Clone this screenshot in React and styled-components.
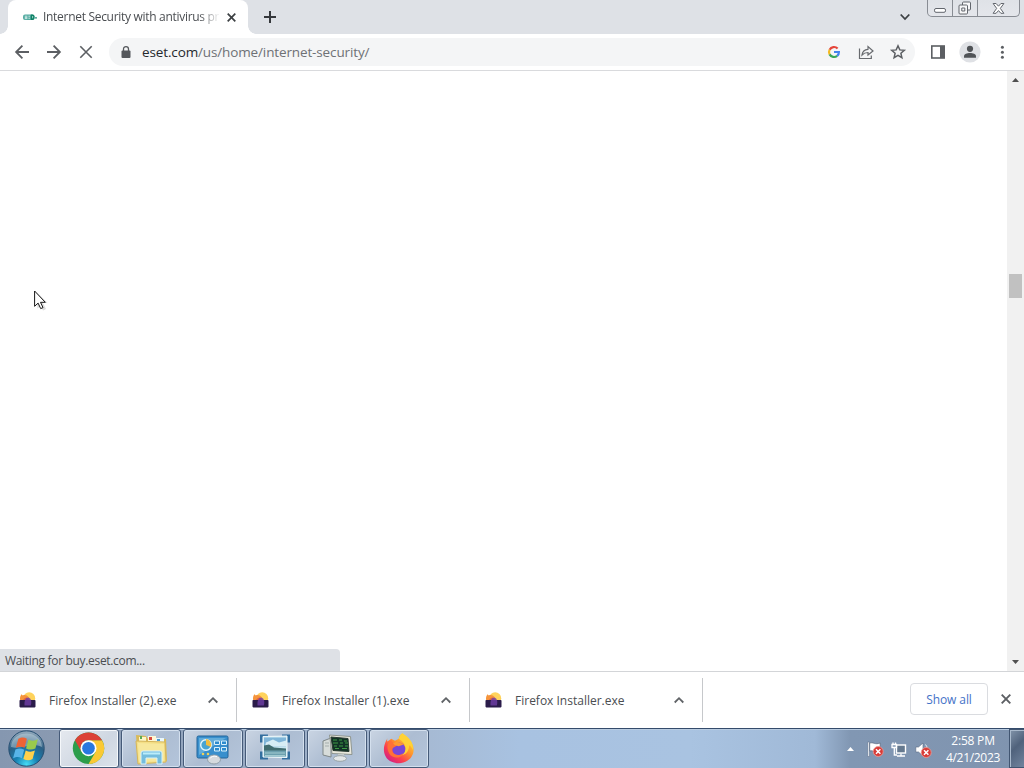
import React from "react";
import styled, { createGlobalStyle } from "styled-components";

const Global = createGlobalStyle`
  * { box-sizing: border-box; }
  body { margin: 0; background: #fff; overflow: hidden; font-family: "Open Sans", "Noto Sans", sans-serif; font-size: 12px; }
  svg { display: block; flex: none; overflow: visible; }
`;

const Screen = styled.div`
  width: 1024px;
  height: 768px;
  display: flex;
  flex-direction: column;
  position: relative;
  overflow: hidden;
`;

const Label = styled.span`
  white-space: nowrap;
  letter-spacing: ${(p) => p.$track || 0}px;
  font-size: ${(p) => p.$size || 12}px;
  font-weight: ${(p) => p.$weight || 400};
  color: ${(p) => p.$color || "#4a4d51"};
`;

/* ---------- tab strip ---------- */
const TabStrip = styled.header`
  height: 34px;
  flex: none;
  display: flex;
  background: #dee1e6;
  padding-left: 8px;
`;
const Tab = styled.div`
  width: 240px;
  height: 34px;
  background: #fff;
  border-radius: 8px 8px 0 0;
  display: flex;
  align-items: center;
  padding-left: 15px;
  position: relative;
  &::before, &::after {
    content: "";
    position: absolute;
    bottom: 0;
    width: 8px;
    height: 8px;
  }
  &::before { left: -8px; background: radial-gradient(circle at 0 0, #dee1e6 7.5px, #fff 8px); }
  &::after { right: -8px; background: radial-gradient(circle at 100% 0, #dee1e6 7.5px, #fff 8px); }
`;
const TabTitle = styled.div`
  width: 176px;
  margin-left: 6px;
  line-height: 18px;
  mask-image: linear-gradient(90deg, #000 156px, transparent 177px);
`;
const TabClose = styled.div`
  margin-left: 8px;
`;
const NewTab = styled.div`
  margin: 11px 0 0 16px;
`;
const TabSearch = styled.div`
  margin: 13px 17px 0 auto;
`;
const WindowControls = styled.div`
  display: flex;
  width: 93px;
  height: 17px;
  margin-right: 4px;
  border: 1px solid #888c93;
  border-top: 0;
  border-radius: 0 0 5px 5px;
  background: linear-gradient(#dfe2e7, #e4e6eb);
`;
const ControlCell = styled.div`
  width: ${(p) => p.$w}px;
  display: flex;
  align-items: center;
  justify-content: center;
  border-right: ${(p) => (p.$last ? "0" : "1px solid #888c93")};
`;

/* ---------- toolbar ---------- */
const Toolbar = styled.nav`
  height: 37px;
  flex: none;
  display: flex;
  align-items: center;
  padding: 0 14px;
  border-bottom: 1px solid #d9dadd;
  background: #fff;
`;
const NavButtons = styled.div`
  display: flex;
  gap: 16px;
`;
const AddressBar = styled.div`
  display: flex;
  align-items: center;
  width: 806px;
  height: 28px;
  margin-left: 15px;
  padding: 0 9px 0 12px;
  border-radius: 14px;
  background: #f4f5f6;
`;
const Url = styled(Label)`
  margin-left: 11px;
  b { font-weight: 400; color: #25282c; }
`;
const BarActions = styled.div`
  display: flex;
  align-items: center;
  gap: 16px;
  margin-left: auto;
  svg:first-child { margin-right: 2px; }
`;
const Tools = styled.div`
  display: flex;
  align-items: center;
  gap: 14px;
  margin-left: 15px;
  svg:last-child { margin-left: 5px; }
`;

/* ---------- page ---------- */
const Page = styled.main`
  height: 600px;
  flex: none;
  display: flex;
  justify-content: flex-end;
  position: relative;
`;
const Scrollbar = styled.div`
  width: 17px;
  background: #f1f1f1;
  display: flex;
  flex-direction: column;
  align-items: center;
  padding: 7px 0 7px;
`;
const Thumb = styled.div`
  width: 13px;
  height: 24px;
  margin: 192px 0 auto;
  background: #c1c1c1;
`;
const Status = styled.div`
  position: absolute;
  left: 0;
  bottom: 0;
  width: 340px;
  height: 22px;
  padding-left: 5px;
  line-height: 24px;
  background: #dee1e6;
  border-radius: 0 4px 0 0;
`;
const Pointer = styled.div`
  position: absolute;
  left: 34px;
  top: 219px;
`;

/* ---------- downloads ---------- */
const Shelf = styled.section`
  height: 57px;
  flex: none;
  display: flex;
  align-items: center;
  border-top: 1px solid #d3d5d8;
  background: #fff;
`;
const Download = styled.div`
  width: ${(p) => p.$w}px;
  height: 44px;
  display: flex;
  align-items: center;
  padding: 0 18px 0 ${(p) => p.$w - 218}px;
  border-right: 1px solid #c6c8cb;
`;
const FileName = styled(Label)`
  margin: 0 auto 0 13px;
`;
const ShowAll = styled.div`
  width: 78px;
  height: 32px;
  margin: 0 13px 2px auto;
  border: 1px solid #dadce0;
  border-radius: 4px;
  display: flex;
  align-items: center;
  justify-content: center;
`;
const ShelfClose = styled.div`
  margin: 0 13px 2px 0;
`;

/* ---------- taskbar ---------- */
const Taskbar = styled.footer`
  height: 40px;
  flex: none;
  display: flex;
  border-top: 1px solid #344b6b;
  box-shadow: inset 0 1px #b9cce1;
  background: linear-gradient(90deg, #8597b0 0, #8a9ab1 55px, #a6bad4 430px, #a8c2e1 520px, #a9c3e1 690px, #a0b9d7 815px, #8197b3 850px, #8094af 1024px);
`;
const Start = styled.div`
  width: 59px;
  padding: 1px 0 0 8px;
`;
const TaskButton = styled.div`
  width: 60px;
  height: 39px;
  margin-right: 2px;
  display: flex;
  align-items: center;
  justify-content: center;
  border: 1px solid #455a78;
  border-radius: 3px;
  box-shadow: inset 0 0 0 1px ${(p) => (p.$active ? "#f5f8fb" : "#d4e0ee")};
  background: ${(p) =>
    p.$active
      ? "linear-gradient(135deg, #e5e9ef, #cfd7e2 60%, #dce3eb)"
      : "linear-gradient(135deg, #cad5e3, #adbdd2 50%, #b4c5db)"};
`;
const Tray = styled.div`
  display: flex;
  align-items: center;
  margin-left: auto;
`;
const TrayIcons = styled.div`
  display: flex;
  align-items: center;
  gap: 8px;
  margin: 2px 13px 0 13px;
`;
const Clock = styled.div`
  width: 56px;
  display: flex;
  flex-direction: column;
  align-items: center;
  line-height: 17px;
  margin: 1px 8px 0 0;
`;
const Peek = styled.div`
  width: 15px;
  height: 39px;
  border: 1px solid #415571;
  border-right: 0;
  box-shadow: inset 1px 1px #a9b9cc;
  background: linear-gradient(135deg, #8294aa, #50627c 45%, #71849e);
`;

/* ---------- icons ---------- */
const Cross = ({ size = 9, w = 1.7, c = "#3c4043" }) => (
  <svg width={size} height={size} viewBox={`0 0 ${size} ${size}`} stroke={c} strokeWidth={w}>
    <path d={`M.7 .7 ${size - 0.7} ${size - 0.7}M${size - 0.7} .7 .7 ${size - 0.7}`} />
  </svg>
);
const Chevron = ({ up, c = "#606367" }) => (
  <svg width="10" height="7" viewBox="0 0 10 7" fill="none" stroke={c} strokeWidth="1.8">
    <path d={up ? "M.7 5.5 5 1.2 9.3 5.5" : "M.7 1.5 5 6 9.3 1.5"} />
  </svg>
);
const Arrow = ({ flip }) => (
  <svg width="16" height="16" viewBox="0 0 16 16" fill="none" stroke="#5c5f63" strokeWidth="1.8">
    <path transform={flip ? "translate(16) scale(-1 1)" : undefined} d="M15 8H2.5M8.4 1.7 2.1 8l6.3 6.3" />
  </svg>
);
const EsetMark = () => (
  <svg width="14" height="8" viewBox="0 0 14 8">
    <rect x="0" y="1.4" width="11.5" height="5.6" rx="2" fill="#52aaa0" />
    <path d="M1.8 3.2h2.6M1.8 4.4h2.6M1.8 5.6h2.6M5.4 3.2h1.6M5.4 5.2h1.6" stroke="#e8f6f4" strokeWidth=".8" />
    <path d="M7.8 1.4h1.7a2 2 0 0 1 2 2v1.600a2 2 0 0 1-2 2H7.8Z" fill="#0f8266" />
    <path d="M9.600 3v2.300" stroke="#c4e4db" strokeWidth=".8" />
    <circle cx="13" cy="4.8" r=".9" fill="#168a73" />
  </svg>
);
const Lock = () => (
  <svg width="10" height="13" viewBox="0 0 10 13">
    <rect x=".5" y="4.6" width="9" height="7.4" rx="1" fill="#55585c" />
    <path d="M2.5 5V3.1a2.5 2.5 0 0 1 5 0V5" fill="none" stroke="#55585c" strokeWidth="1.3" />
  </svg>
);
const GoogleG = () => (
  <svg width="12" height="12" viewBox="0 0 12 12" fill="none" strokeWidth="2.2">
    <path d="M9.6 2.5A5 5 0 0 0 1.6 3.7" stroke="#e5453a" />
    <path d="M1.6 3.7a5 5 0 0 0 0 4.7" stroke="#f4b921" />
    <path d="M1.6 8.4a5 5 0 0 0 7.6 1.4" stroke="#37a657" />
    <path d="M9.2 9.8A4.7 4.7 0 0 0 10.9 6H6" stroke="#4384ee" />
  </svg>
);
const Share = () => (
  <svg width="16" height="16" viewBox="0 0 16 16" fill="none" stroke="#676a6e" strokeWidth="1.2">
    <path d="M1.5 4.5v10h11.8v-3M4 11c.4-3.7 2.5-5.5 6-5.7V2.6L15 7l-5 4V8.5c-2.5 0-4.4.8-6 2.5Z" />
  </svg>
);
const Star = () => (
  <svg width="16" height="16" viewBox="0 0 16 16" fill="none" stroke="#5c5f63" strokeWidth="1.5">
    <path d="m8 1.8 1.8 4.1 4.5.4-3.4 3 1 4.4L8 11.4l-3.9 2.3 1-4.4-3.4-3 4.5-.4Z" />
  </svg>
);
const SidePanel = () => (
  <svg width="15" height="14" viewBox="0 0 15 14">
    <rect x="1.8" y="1" width="12.4" height="12" fill="none" stroke="#5c5f63" strokeWidth="1.6" />
    <path d="M10 1h4.2v12H10Z" fill="#5c5f63" />
  </svg>
);
const Avatar = () => (
  <svg width="22" height="22" viewBox="0 0 22 22">
    <circle cx="11" cy="11" r="10.6" fill="#dfe1e5" />
    <circle cx="11" cy="7.8" r="3.1" fill="#505357" />
    <path d="M5 16.8v-1.5c0-2 3-3.2 6-3.2s6 1.2 6 3.2v1.5Z" fill="#505357" />
  </svg>
);
const Dots = () => (
  <svg width="4" height="14" viewBox="0 0 4 14" fill="#5c5f63">
    <circle cx="2.4" cy="2.2" r="1.5" /><circle cx="2.4" cy="7.2" r="1.5" /><circle cx="2.4" cy="12.2" r="1.5" />
  </svg>
);
const Triangle = ({ down, c = "#505050" }) => (
  <svg width="7" height="4" viewBox="0 0 7 4"><path fill={c} d={down ? "M0 0h7L3.5 4Z" : "M0 4h7L3.5 0Z"} /></svg>
);
const Cursor = () => (
  <svg width="14" height="22" viewBox="0 0 14 22">
    <path d="m2.5 2 11 11H9l3 6-3 1.5-2.5-5-3 3Z" fill="#999" opacity=".35" />
    <path d="M.6 1v15.3l3.5-3.2 2.6 5.5 2.3-1-2.5-5.3h4.8Z" fill="#fff" stroke="#171717" />
  </svg>
);
const MinimizeGlyph = () => (
  <svg width="13" height="17" viewBox="0 0 13 17"><rect x=".5" y="8.5" width="11" height="3.8" rx="1.5" fill="#fff" stroke="#62666d" /></svg>
);
const RestoreGlyph = () => (
  <svg width="14" height="14" viewBox="0 0 14 14" fill="#f7f7f8" stroke="#62666d">
    <rect x="4.5" y="1" width="8" height="8" rx="1" /><rect x="1" y="4" width="8.5" height="9" rx="1" /><path d="M3.8 7h3v3h-3Z" />
  </svg>
);
const CloseGlyph = () => (
  <svg width="12" height="11" viewBox="0 0 12 11" fill="#fff" stroke="#62666d">
    <path d="M.1.5h3L5.5 3.2 7.9.5h3L7.3 5.4l3.6 4.9h-3L5.5 7.6l-2.4 2.7h-3l3.6-4.9Z" />
  </svg>
);
const InstallerIcon = () => (
  <svg width="17" height="17" viewBox="0 0 17 17">
    <g transform="translate(0 -.6)">
      <circle cx="10.2" cy="6.8" r="6" fill="#ffd35c" />
      <path d="M1.2 9c-.6-3 .2-4.800 1.300-6.200l1.300 1.200c1.800-1 4.700-.2 5.700 1.500L11 9Z" fill="#f5943c" />
      <path d="M3.6 9.500c.6-2.200 2.400-3.500 4.400-3.500l2.500 3.500Z" fill="#e0663f" />
      <rect x=".5" y="8.500" width="16" height="7.500" rx=".8" fill="#2b1c4a" />
      <path d="M5.500 14c-.4-4.600 1-8 3.900-8 2.900.6 3.400 4.600 2.400 8Z" fill="#6f3fa6" opacity=".8" />
    </g>
  </svg>
);
const StartOrb = () => (
  <svg width="37" height="37" viewBox="0 0 37 37">
    <defs>
      <radialGradient id="orb" cx=".5" cy=".95" r=".9">
        <stop offset="0" stopColor="#45dcf5" /><stop offset=".35" stopColor="#1782b4" /><stop offset=".7" stopColor="#2b5f84" /><stop offset="1" stopColor="#8ba4b8" />
      </radialGradient>
    </defs>
    <circle cx="18.5" cy="18.5" r="17.7" fill="url(#orb)" stroke="#264f72" />
    <path d="M3 17C4-1 33-1 34 17c-9-5-22 3-31 0Z" fill="#d7e4e9" opacity=".42" />
    <g transform="translate(-2 -2.500) scale(1.180)">
      <path d="M10.5 9.5c3-1.600 5-1.300 7.200 0l-2 7.700c-2.500-1.300-5-1.200-7.400 0Z" fill="#ee6335" />
      <path d="M19 10.1c3 1.500 5.200 1.400 8-.1l-2.100 7.800c-2.700 1.300-5 1.200-7.900-.1Z" fill="#9acb4d" />
      <path d="M8 18.700c3-1.400 4.800-1.200 7.400.1l-2 7.200c-2.600-1.500-4.500-1.400-7.400 0Z" fill="#58b4e8" />
      <path d="M16.700 19.400c2.800 1.400 5.100 1.400 7.800.1l-2 7.300c-2.700 1.500-5 1.300-7.800-.1Z" fill="#ffd04b" />
    </g>
  </svg>
);
const Chrome = () => (
  <svg width="34" height="34" viewBox="0 0 34 34">
    <g transform="translate(-.5 -.8)">
      <circle cx="17" cy="17" r="15.7" fill="#2c9d4b" />
      <path d="M17 9h13.500A15.700 15.700 0 0 1 17 32.700L23.900 21Z" fill="#fac934" />
      <path d="M3.500 9a15.700 15.700 0 0 1 27 0H17a8 8 0 0 0-6.900 12Z" fill="#dc4136" />
      <circle cx="17" cy="17" r="8" fill="#fff" /><circle cx="17" cy="17" r="6.300" fill="#2878e0" />
    </g>
  </svg>
);
const Explorer = () => (
  <svg width="34" height="32" viewBox="0 0 34 32">
    <path d="m2 2 10 1 2 3h18l1 22-29 3Z" fill="#d9ba58" />
    <path d="M5 4h7v5H5Z" fill="#fff6c5" /><path d="M6 3h2v3H6Z" fill="#5aaa57" />
    <path d="M14 3h8v6h-8Z" fill="#fff7d3" /><path d="M15 4h3v3h-3Z" fill="#d9493e" />
    <path d="M22 5h8v6h-8Z" fill="#e8f6fb" /><path d="M23 6h3v2h-3Z" fill="#4d9ed0" />
    <path d="m2 8 29 1 1 20-28 2Z" fill="#f4df86" stroke="#d5b65b" />
    <path d="m4 10 26 1v17L5 29Z" fill="#f7e89d" />
    <path d="M7 20q0-2 2-2h17q2 0 2 2v11h-5v-6H12v6H7Z" fill="#75bddd" stroke="#d7f2fb" />
    <path d="M9 20.500h17" stroke="#bbecfa" strokeWidth="2" />
  </svg>
);
const ControlPanel = () => (
  <svg width="34" height="32" viewBox="0 0 34 32">
    <rect x="1" y="3" width="31" height="22" rx="1.500" fill="#388fcd" stroke="#226499" />
    <path d="M3 5h27L3 22Z" fill="#7fbfe2" opacity=".6" />
    <circle cx="10" cy="12" r="5.300" fill="#48a4d2" stroke="#e6f6fc" strokeWidth="1.400" />
    <path d="M10 12V6a6 6 0 0 1 5 8Z" fill="#efbd41" />
    <path d="M18.500 8h5v3.500h-5Zm7 0h5v3.500h-5Zm-7 6.500h5V18h-5Zm7 0h5V18h-5Z" fill="#2b8bce" stroke="#d9f1fb" />
    <circle cx="7" cy="21" r="1.300" fill="#edd05b" /><circle cx="12" cy="21" r="1.300" fill="#edd05b" />
    <ellipse cx="18" cy="26.500" rx="6.500" ry="4.500" fill="#d5dade" stroke="#8f9da7" />
    <path d="M14 25.500c1-2 4-3 7-2" stroke="#fff" fill="none" />
  </svg>
);
const Picture = () => (
  <svg width="34" height="32" viewBox="0 0 34 32">
    <g transform="translate(0 -1.500)">
      <path d="M3.500 11V4.500H10M24 4.500h6.500V11M3.500 20v6.500H10M24 26.500h6.500V20" stroke="#336f9f" strokeWidth="3" fill="none" />
      <path d="m5 5 24-.5V26L5 25.500Z" fill="#c9e7f1" stroke="#f0f8fa" />
      <path d="M6 6h22v9H6Z" fill="#7fb5d8" /><path d="m8 11 7-3 6 3 7-2v6H7Z" fill="#d6edf5" />
      <path d="m6 14 5-1 5 3 12 1v3H6Z" fill="#406d70" /><path d="M6 19h22v6H6Z" fill="#6b9fae" />
      <path d="M7 21.500h20M7 24h20" stroke="#a3cbd1" />
    </g>
  </svg>
);
const Monitor = () => (
  <svg width="34" height="32" viewBox="0 0 34 32">
    <path d="m3 8 8-3v19l-8-2Z" fill="#d7dcda" stroke="#7f8788" /><path d="M5 10h4m-4 3h4" stroke="#a5aead" />
    <path d="m9.500 2 21 1.500 1.500 18-20-1Z" fill="#e9e8dc" stroke="#8f9690" />
    <path d="m11 4 17 1.500 1 13-16-1Z" fill="#123326" stroke="#283a31" />
    <path d="M13 7h4m2 0h3m2 1h3M13 10h5m2 0h3m2 0h3M14 13h3m2 0h4m2 0h3M15 15.500h4m3 0h5" stroke="#3f9a44" strokeWidth="1.200" />
    <path d="M18 21h6v5h-6Z" fill="#c5caca" /><ellipse cx="20" cy="25.500" rx="6.500" ry="2.800" fill="#e3e6e7" stroke="#9aa4a6" />
  </svg>
);
const Firefox = () => (
  <svg width="34" height="34" viewBox="0 0 34 34">
    <defs>
      <linearGradient id="ff" x1=".85" y1=".1" x2=".2" y2=".9"><stop stopColor="#ffdb37" /><stop offset=".42" stopColor="#ff922c" /><stop offset=".75" stopColor="#fb3e50" /><stop offset="1" stopColor="#d9257c" /></linearGradient>
    </defs>
    <g transform="translate(.8 .2) scale(.940)">
      <path d="M5 6.500C4 9 5 10 5 10L9 7l4 2 4-2c0-3 3-6 4-6 0 3 3 4 4 7l2-1c12 11 4 26-10 26C2 33-3 19 5 6.500Z" fill="url(#ff)" />
      <path d="M21 1c6 4 12 9 11 18-1-2-2-4-4-5 0 6-3 10-9 11 10-10 2-15-2-18 0-3 3-5 4-6Z" fill="#ffd235" />
      <circle cx="17" cy="18" r="7" fill="#7947d6" />
      <path d="M9 8c0 3 2 4 6 5 0 3-5 2-5 6 0 5 7 7 12 3-2 6-11 7-15 1C4 17 4 12 9 8Z" fill="#ff7137" />
      <path d="M11 12c4-3 8-1 11 1l-5 2-4-1Z" fill="#ff9a31" />
    </g>
  </svg>
);
const ErrorBadge = () => (
  <g transform="translate(11.200 10.500)"><circle r="5" fill="#d83b37" stroke="#ee9b93" strokeWidth=".8" /><path d="m-2.200-2.200 4.400 4.400m0-4.400-4.400 4.400" stroke="#fff" strokeWidth="1.500" /></g>
);
const Flag = () => (
  <svg width="16" height="17" viewBox="0 0 16 17"><path d="M.8 1v14.500h1.600V1Z" fill="#fff" stroke="#526580" strokeWidth=".5" /><path d="M2.700 2c4-1 5 2 10.500 0v8c-5 2-6.500-1-10.500 0Z" fill="#fff" stroke="#54647b" strokeWidth=".7" /><ErrorBadge /></svg>
);
const Network = () => (
  <svg width="16" height="16" viewBox="0 0 16 16" stroke="#fff" fill="none"><rect x="5.500" y="3" width="9" height="8" fill="#65798f" strokeWidth="1.400" /><path d="M10 11.500v2m-4 .5h8M1 2.500h4.500v3H1ZM2 .5v2m2.500-2v2M3.300 5.500V13H6" strokeWidth="1.300" /></svg>
);
const Speaker = () => (
  <svg width="17" height="16" viewBox="0 0 17 16"><path d="M.8 5h2.700L8 1v13l-4.500-4H.8Z" fill="#fff" stroke="#56677f" strokeWidth=".6" /><path d="M10.500 2.500q2 2 1.500 5" stroke="#e6edf4" fill="none" /><ErrorBadge /></svg>
);

const downloads = [
  { name: "Firefox Installer (2).exe", width: 237, track: 0.04 },
  { name: "Firefox Installer (1).exe", width: 233, track: 0.04 },
  { name: "Firefox Installer.exe", width: 233, track: 0 },
];
const apps = [Chrome, Explorer, ControlPanel, Picture, Monitor, Firefox];

export default function App() {
  return (
    <Screen>
      <Global />
      <TabStrip>
        <Tab>
          <EsetMark />
          <TabTitle><Label $track={-0.3}>Internet Security with antivirus pr</Label></TabTitle>
          <TabClose><Cross /></TabClose>
        </Tab>
        <NewTab><svg width="12" height="12" viewBox="0 0 12 12" stroke="#35383c" strokeWidth="2"><path d="M6 0v12M0 6h12" /></svg></NewTab>
        <TabSearch><Chevron c="#3c4043" /></TabSearch>
        <WindowControls>
          <ControlCell $w={25}><MinimizeGlyph /></ControlCell>
          <ControlCell $w={25}><RestoreGlyph /></ControlCell>
          <ControlCell $w={41} $last><CloseGlyph /></ControlCell>
        </WindowControls>
      </TabStrip>
      <Toolbar>
        <NavButtons><Arrow /><Arrow flip /><svg width="16" height="16" viewBox="0 0 16 16" stroke="#5c5f63" strokeWidth="1.6"><path d="m2.3 2.3 11.400 11.400m0-11.400L2.3 13.7" /></svg></NavButtons>
        <AddressBar>
          <Lock />
          <Url $size={13.5} $track={-0.13} $color="#6e7175"><b>eset.com</b>/us/home/internet-security/</Url>
          <BarActions><GoogleG /><Share /><Star /></BarActions>
        </AddressBar>
        <Tools><SidePanel /><Avatar /><Dots /></Tools>
      </Toolbar>
      <Page>
        <Scrollbar><Triangle /><Thumb /><Triangle down /></Scrollbar>
        <Pointer><Cursor /></Pointer>
        <Status><Label $track={-0.32}>Waiting for buy.eset.com...</Label></Status>
      </Page>
      <Shelf>
        {downloads.map((d) => (
          <Download key={d.name} $w={d.width}><InstallerIcon /><FileName $track={d.track}>{d.name}</FileName><Chevron up /></Download>
        ))}
        <ShowAll><Label $color="#4472c8" $weight={500} $track={-0.1}>Show all</Label></ShowAll>
        <ShelfClose><Cross size={10} w={1.9} c="#5c5f63" /></ShelfClose>
      </Shelf>
      <Taskbar>
        <Start><StartOrb /></Start>
        {apps.map((Icon, i) => <TaskButton key={i} $active={i === 0}><Icon /></TaskButton>)}
        <Tray>
          <Triangle c="#fff" />
          <TrayIcons><Flag /><Network /><Speaker /></TrayIcons>
          <Clock><Label $color="#fff" $track={-0.2}>2:58 PM</Label><Label $color="#fff" $track={-0.3}>4/21/2023</Label></Clock>
          <Peek />
        </Tray>
      </Taskbar>
    </Screen>
  );
}
